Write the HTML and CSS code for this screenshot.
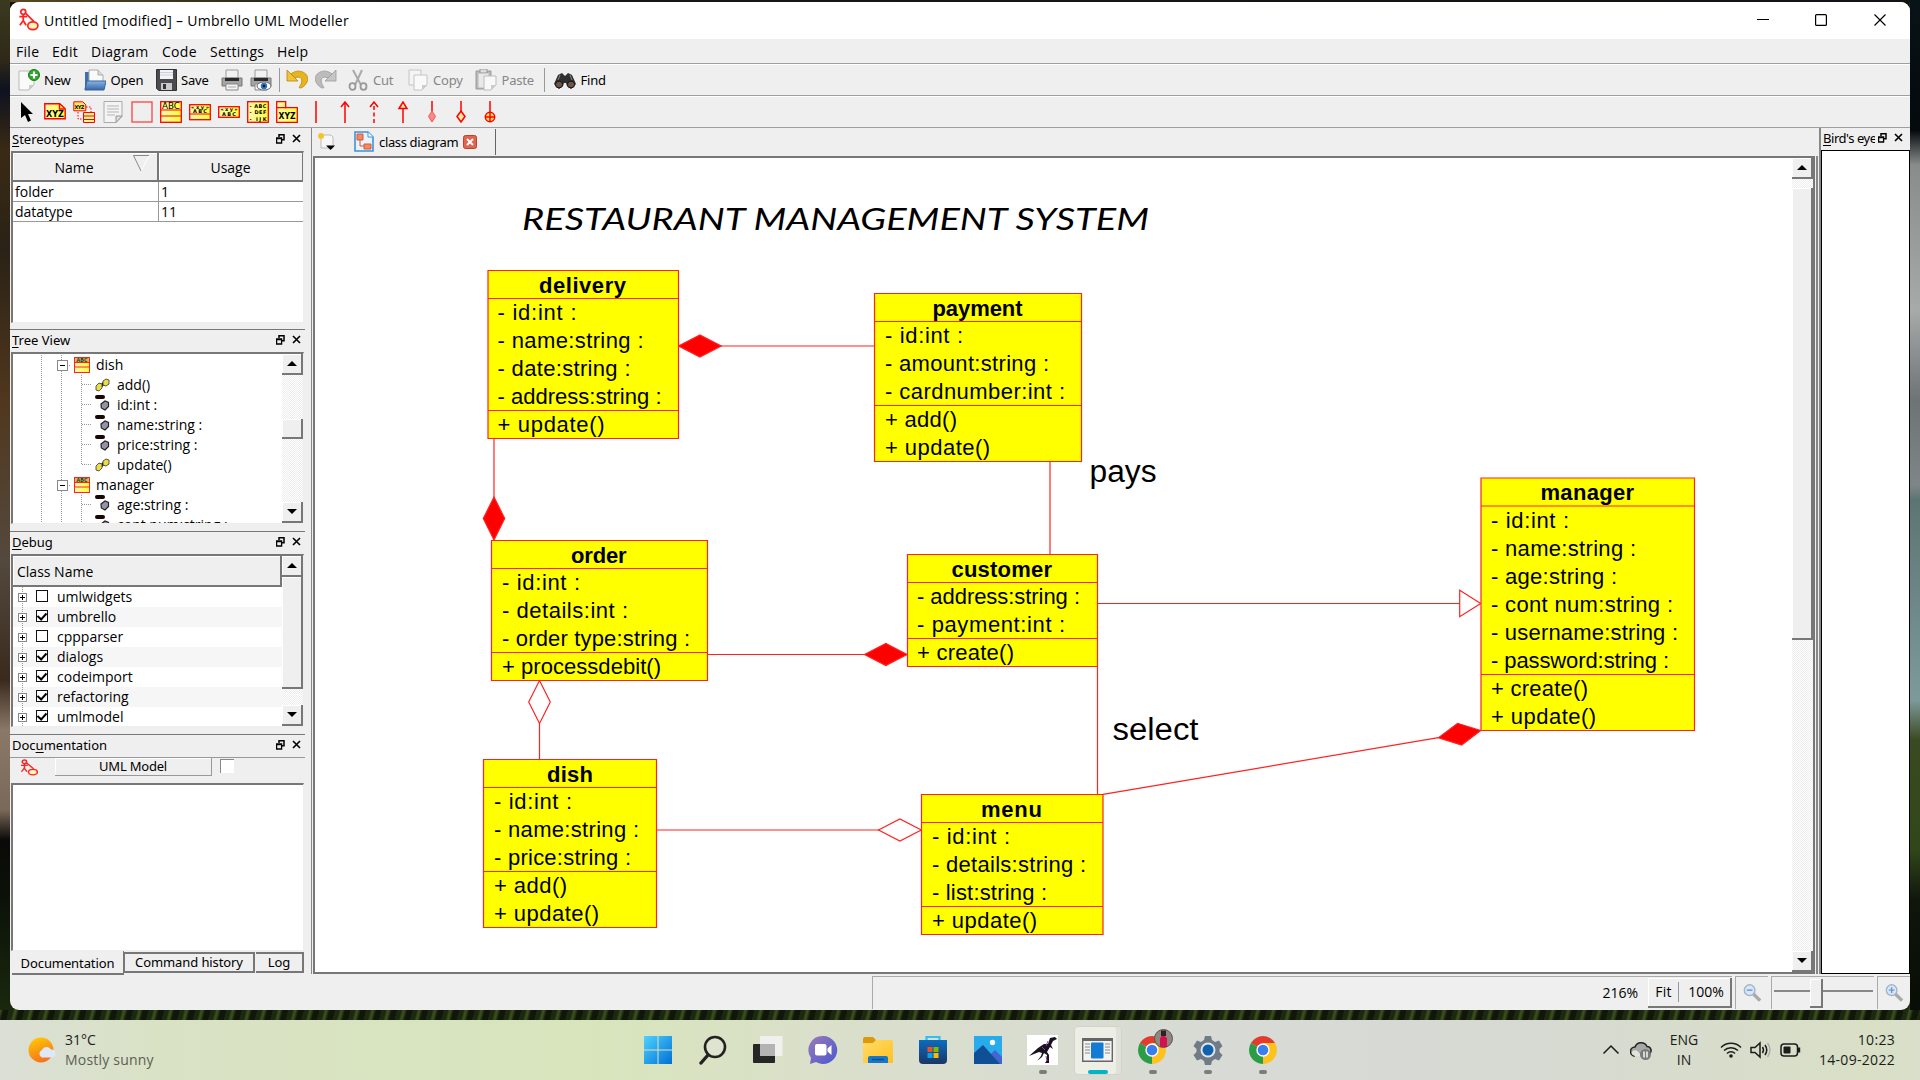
FILE: index.html
```html
<!DOCTYPE html>
<html lang="en">
<head>
<meta charset="utf-8">
<title>Umbrello UML Modeller</title>
<link rel="stylesheet" href="styles.css">
</head>
<body>
<svg class="defs" width="0" height="0">
  <defs>
    <linearGradient id="yel" x1="0" y1="0" x2="1" y2="0"><stop offset="0" stop-color="#fff9b0"/><stop offset="1" stop-color="#ffff38"/></linearGradient>
    <linearGradient id="blu" x1="0" y1="0" x2="0" y2="1"><stop offset="0" stop-color="#8db4e2"/><stop offset="1" stop-color="#3566a8"/></linearGradient>
    <linearGradient id="win" x1="0" y1="0" x2="1" y2="1"><stop offset="0" stop-color="#4fd2ff"/><stop offset="1" stop-color="#0070d4"/></linearGradient>
    <linearGradient id="sun" x1="0" y1="0" x2=".4" y2="1"><stop offset="0" stop-color="#ffd000"/><stop offset="1" stop-color="#f5751d"/></linearGradient>
    <linearGradient id="chat" x1="0" y1="0" x2="1" y2="1"><stop offset="0" stop-color="#9a7bb8"/><stop offset="1" stop-color="#4a57d2"/></linearGradient>
    <linearGradient id="fold" x1="0" y1="0" x2="1" y2="1"><stop offset="0" stop-color="#ffdc68"/><stop offset="1" stop-color="#ffc122"/></linearGradient>
    <linearGradient id="store" x1="0" y1="0" x2="0" y2="1"><stop offset="0" stop-color="#0b6cc0"/><stop offset="1" stop-color="#1c3566"/></linearGradient>
    <symbol id="i-app" viewBox="0 0 20 24"><g fill="none" stroke="#f22" stroke-width="1.8"><circle cx="4" cy="4" r="2.6"/><path d="M4 7v6M0 9h8M4 13l-3.500 5M4 13l3 5M6 5l9 9"/><ellipse cx="14" cy="18.500" rx="5.300" ry="4" fill="#fdf7b8"/></g></symbol>
    <symbol id="i-class" viewBox="0 0 16 16"><rect x=".5" y=".5" width="15" height="15" fill="url(#yel)" stroke="#f22"/><path d="M1 5.500h14M1 10h14" stroke="#f22" stroke-width="1.200"/><path d="M1 1h14v4H1z" fill="#c8bd55"/><text x="8" y="5" font-size="5.500" font-weight="bold" text-anchor="middle" fill="#333">ABC</text></symbol>
    <symbol id="i-op" viewBox="0 0 15 14"><path d="M6 8l4-4" stroke="#222" stroke-width="3"/><path d="M1 8l3-3 3 1v4l-3 3-3-1zM8 3l3-2 3 1v4l-3 2-3-1z" fill="#eddc44" stroke="#333" stroke-width=".8"/></symbol>
    <symbol id="i-attr" viewBox="0 0 15 16"><rect x="0" y="0" width="10" height="4" rx="2" fill="#1b0606"/><path d="M6 9l4-3 3.500 1.500v4L10 15l-3.700-2z" fill="#9693a6" stroke="#222" stroke-width="1.200"/></symbol>
    <symbol id="i-float" viewBox="0 0 9 10"><path d="M3 .8h5v5H6M3 0v3" fill="none" stroke="#000" stroke-width="1.500"/><path d="M.6 4h5v5h-5zM0 4.500h6" fill="none" stroke="#000" stroke-width="1.300"/></symbol>
    <symbol id="i-x" viewBox="0 0 9 9"><path d="M1 1l7 7M8 1L1 8" stroke="#000" stroke-width="1.600"/></symbol>
    <symbol id="i-chrome" viewBox="0 0 28 28"><path d="M14 14L1.900 7A14 14 0 0 1 26.100 7z" fill="#e33b2e"/><path d="M14 14L1.900 7A14 14 0 0 0 14 28l6-10.500z" fill="#2c9d47"/><path d="M14 14l0 14A14 14 0 0 0 26.100 7H14z" fill="#fcc31e"/><circle cx="14" cy="14" r="6.700" fill="#fff"/><circle cx="14" cy="14" r="5.300" fill="#3b7ded"/></symbol>
    <symbol id="i-print" viewBox="0 0 22 22"><path d="M5 1h12v8H5z" fill="#f2f2f2" stroke="#999"/><path d="M1 9h20v8H1z" fill="#a4a4a4" stroke="#777"/><path d="M4 9h14v3H4z" fill="#2a2a2a"/><path d="M5 15h12v6H5z" fill="#f4f4f4" stroke="#888"/><path d="M7 18h8" stroke="#aaa"/></symbol>
    <symbol id="i-lens" viewBox="0 0 20 20"><path d="M11 11l7 7" stroke="#aaa" stroke-width="3.600"/><circle cx="7" cy="7" r="5.600" fill="#d6e8fb" stroke="#a7b4c2" stroke-width="1.500"/></symbol>
  </defs>
</svg>

<div class="window">
  <header class="titlebar">
    <svg class="app-icon" width="20" height="23"><use href="#i-app"/></svg>
    <span class="caption">Untitled [modified] – Umbrello UML Modeller</span>
    <svg class="winctl" width="150" height="20" viewBox="0 0 150 20"><g fill="none" stroke="#000" stroke-width="1.200"><path d="M7 9.500h12"/><rect x="65.600" y="4.600" width="10.800" height="10.800" rx="1"/><path d="M124.500 4.500l11 11M135.500 4.500l-11 11"/></g></svg>
  </header>
  <nav class="menubar"><span>File</span><span>Edit</span><span>Diagram</span><span>Code</span><span>Settings</span><span>Help</span></nav>

  <div class="toolbar main">
    <svg width="22" height="22" viewBox="0 0 22 22"><path d="M1 2h15v14l-5 5H1z" fill="#fafafa" stroke="#b9b9b9"/><path d="M16 16h-5v5z" fill="#ccc"/><circle cx="16" cy="6" r="5.500" fill="#2ba82b" stroke="#128012"/><path d="M16 2.500v7M12.500 6h7" stroke="#fff" stroke-width="2.200"/></svg><span>New</span>
    <svg width="22" height="22" viewBox="0 0 22 22"><path d="M1 3h5l1 3v14H1z" fill="#3d6fae"/><path d="M5 1h9l5 5v12H5z" fill="#fafafa" stroke="#aaa"/><path d="M14 1v5h5" fill="#ddd" stroke="#aaa"/><path d="M1 20l2-8h19l-2 9H1z" fill="url(#blu)" stroke="#35659f"/></svg><span>Open</span>
    <svg width="21" height="22" viewBox="0 0 21 22"><path d="M.5.5h20v21H3l-2.500-2z" fill="#4a4a50" stroke="#333"/><path d="M4 1h13v9H4z" fill="#f4f4f4"/><path d="M4 3.500h13M4 6h13" stroke="#c9d0de"/><path d="M5 14h11v7H5z" fill="#c9c9c9"/><path d="M7 15h3v5H7z" fill="#333"/></svg><span>Save</span>
    <svg width="22" height="22"><use href="#i-print"/></svg>
    <svg width="22" height="22" viewBox="0 0 22 22"><use href="#i-print" width="22" height="22"/><ellipse cx="14" cy="17" rx="7" ry="4" fill="#fff" stroke="#667"/><circle cx="14" cy="17" r="3.200" fill="#2d74c0"/><circle cx="14" cy="17" r="1.300" fill="#012"/></svg>
    <i class="sep"></i>
    <svg width="22" height="22" viewBox="0 0 22 22"><path d="M5 5C13-2 25 5 21 13c-2 4-5 6-7 6-1 0-1-1 0-2 4-6 1-11-5-8z" fill="#e8b31c" stroke="#b98708" stroke-width=".8"/><path d="M1 1v11h11z" fill="#f0c43a" stroke="#b98708" stroke-width=".8"/></svg>
    <svg width="22" height="22" viewBox="0 0 22 22"><g transform="translate(22 0) scale(-1 1)"><path d="M5 5C13-2 25 5 21 13c-2 4-5 6-7 6-1 0-1-1 0-2 4-6 1-11-5-8z" fill="#bcbcbc" stroke="#999" stroke-width=".8"/><path d="M1 1v11h11z" fill="#c6c6c6" stroke="#999" stroke-width=".8"/></g></svg>
    <svg width="20" height="22" viewBox="0 0 20 22"><path d="M5 1l8 15M14 1L7 16" stroke="#aaa" stroke-width="2"/><g fill="none" stroke="#999" stroke-width="1.800"><ellipse cx="4.500" cy="17.500" rx="3" ry="3.300"/><ellipse cx="15.500" cy="17.500" rx="3" ry="3.300"/></g></svg><span class="off">Cut</span>
    <svg width="20" height="22" viewBox="0 0 20 22"><path d="M1 1h12v15H1z" fill="#f4f4f4" stroke="#c4c4c4"/><path d="M6 6h13v10l-5 5H6z" fill="#f9f9f9" stroke="#c4c4c4"/><path d="M19 16h-5v5z" fill="#ccc"/></svg><span class="off">Copy</span>
    <svg width="22" height="22" viewBox="0 0 22 22"><path d="M1 2h15v18H1z" fill="#b9b9b9" stroke="#999"/><path d="M5 0h7v4H5z" fill="#ddd" stroke="#999"/><path d="M3.500 4.500h10v14h-10z" fill="#e9e9e9"/><path d="M9 7h12v9l-5 5H9z" fill="#f8f8f8" stroke="#bbb"/><path d="M21 16h-5v5z" fill="#ccc"/></svg><span class="off">Paste</span>
    <i class="sep"></i>
    <svg width="22" height="22" viewBox="0 0 22 22"><path d="M4 6l4-2 3 3 3-3 4 2 4 9-5 5-4-3-1-3h-2l-1 3-4 3-5-5z" fill="#302f2f"/><ellipse cx="5" cy="15.500" rx="3.600" ry="3.400" fill="#6b5648" stroke="#111"/><ellipse cx="17" cy="15.500" rx="3.600" ry="3.400" fill="#6b5648" stroke="#111"/><path d="M6 6l-2 5M16 6l2 5" stroke="#888"/></svg><span>Find</span>
  </div>

  <div class="toolbar tools">
    <svg viewBox="0 0 22 22"><path d="M6 1v16l4-3 3 7 3-1.500-3-6.500h5z" fill="#000"/></svg>
    <svg viewBox="0 0 22 22"><path d="M.8 2.800h15l5.400 5v10H.8z" fill="url(#yel)" stroke="#f00" stroke-width="1.400"/><path d="M15.500 3v5h5" fill="none" stroke="#f00" stroke-width="1.400"/><text class="glyph" x="11" y="15.500" textLength="18" lengthAdjust="spacingAndGlyphs">XYZ</text></svg>
    <svg viewBox="0 0 22 22"><path d="M.8.8h9l3 3v6h-12z" fill="#ffe866" stroke="#f00"/><text class="glyph xs" x="6.500" y="8" textLength="10">XYZ</text><path d="M13 6h5v5M5 11v7h4" fill="none" stroke="#f00" stroke-dasharray="1.500 1.500"/><path d="M10.500 11.500h11v10h-11zM10.500 15h11M10.500 18.500h11" fill="#fff690" stroke="#f00"/></svg>
    <svg viewBox="0 0 22 22"><path d="M2 .5h18v15l-6 6H2z" fill="#f4f4f4" stroke="#aaa"/><path d="M5 5h12M5 8h12M5 11h12M5 14h8" stroke="#b5b5b5"/><path d="M20 15h-6v6.500z" fill="#ddd" stroke="#999"/></svg>
    <svg viewBox="0 0 22 22"><rect x="1" y="1" width="20" height="20" fill="none" stroke="#f33" stroke-width="1.200"/></svg>
    <svg viewBox="0 0 22 22"><rect x=".7" y=".7" width="20.600" height="20.600" fill="url(#yel)" stroke="#f00" stroke-width="1.300"/><path d="M1 9h20M1 15h20" stroke="#f00" stroke-width="1.200"/><text class="glyph n" x="11" y="7.500" textLength="18" lengthAdjust="spacingAndGlyphs">ABC</text></svg>
    <svg viewBox="0 0 22 22"><rect x=".7" y="3.700" width="20.600" height="15" fill="url(#yel)" stroke="#f00" stroke-width="1.300"/><path d="M1 13h20" stroke="#f00" stroke-width="1.200"/><text class="glyph xs" x="11" y="7.500" textLength="18">«xy»</text><text class="glyph xs" x="11" y="12" textLength="14">ABC</text></svg>
    <svg viewBox="0 0 22 22"><rect x=".7" y="5.700" width="20.600" height="10.600" fill="url(#yel)" stroke="#f00" stroke-width="1.300"/><text class="glyph xs" x="11" y="10" textLength="17">«xy»</text><text class="glyph xs" x="11" y="15" textLength="14">ABC</text></svg>
    <svg viewBox="0 0 22 22"><rect x=".7" y=".7" width="20.600" height="20.600" fill="url(#yel)" stroke="#f00" stroke-width="1.300"/><text class="glyph xs" x="11" y="6.500" textLength="17">- ABC</text><text class="glyph xs" x="11" y="13" textLength="17">- DEF</text><text class="glyph xs" x="11" y="19.500" textLength="17">- IJK</text></svg>
    <svg viewBox="0 0 22 22"><path d="M.7.700h9v6h11.600v14.600H.7z" fill="url(#yel)" stroke="#f00" stroke-width="1.300"/><path d="M1 6.700h9" stroke="#f00" stroke-width="1.300"/><text class="glyph" x="11" y="18" textLength="17" lengthAdjust="spacingAndGlyphs">XYZ</text></svg>
    <svg viewBox="0 0 22 22"><path d="M11 0v22" class="r"/></svg>
    <svg viewBox="0 0 22 22"><path d="M11 22V2M7 6l4-5 4 5" class="r nf"/></svg>
    <svg viewBox="0 0 22 22"><path d="M11 22V2" class="r" stroke-dasharray="4 2.500"/><path d="M7 6l4-5 4 5" class="r nf"/></svg>
    <svg viewBox="0 0 22 22"><path d="M11 22V7M7 7.500l4-6.500 4 6.500z" class="r"/></svg>
    <svg viewBox="0 0 22 22"><path d="M11 0v10" class="r"/><path d="M11 10l3.500 5.500L11 21l-3.500-5.500z" fill="#f88" stroke="#e55"/></svg>
    <svg viewBox="0 0 22 22"><path d="M11 0v10" class="r"/><path d="M11 10l4 5.500-4 5.500-4-5.500z" class="r"/></svg>
    <svg viewBox="0 0 22 22"><circle cx="11" cy="16" r="4.700" class="r y"/><path d="M11 0v21M6 16h10" class="r"/></svg>
  </div>

  <div class="work">
    <aside class="dock">
      <section class="pane p1">
        <h2><span><u>S</u>tereotypes</span><svg width="9" height="10"><use href="#i-float"/></svg><svg width="9" height="9"><use href="#i-x"/></svg></h2>
        <div class="frame">
          <div class="grid">
            <b>Name<svg width="17" height="17" viewBox="0 0 17 17"><path d="M16 1L8 16" stroke="#fff" fill="none"/><path d="M16 .5H.5L8 16" stroke="#888" fill="none"/></svg></b><b>Usage</b>
            <span>folder</span><span>1</span>
            <span>datatype</span><span>11</span>
          </div>
        </div>
      </section>
      <section class="pane p2">
        <h2><span><u>T</u>ree View</span><svg width="9" height="10"><use href="#i-float"/></svg><svg width="9" height="9"><use href="#i-x"/></svg></h2>
        <div class="frame split">
          <div class="tree">
            <div class="node"><i class="g full"></i><i class="g full box"></i><svg width="16" height="16"><use href="#i-class"/></svg><span>dish</span></div>
            <div class="node"><i class="g full"></i><i class="g full"></i><i class="g full leaf"></i><svg width="15" height="14"><use href="#i-op"/></svg><span>add()</span></div>
            <div class="node"><i class="g full"></i><i class="g full"></i><i class="g full leaf"></i><svg class="at" width="15" height="16"><use href="#i-attr"/></svg><span>id:int :</span></div>
            <div class="node"><i class="g full"></i><i class="g full"></i><i class="g full leaf"></i><svg class="at" width="15" height="16"><use href="#i-attr"/></svg><span>name:string :</span></div>
            <div class="node"><i class="g full"></i><i class="g full"></i><i class="g full leaf"></i><svg class="at" width="15" height="16"><use href="#i-attr"/></svg><span>price:string :</span></div>
            <div class="node"><i class="g full"></i><i class="g full"></i><i class="g half leaf"></i><svg width="15" height="14"><use href="#i-op"/></svg><span>update()</span></div>
            <div class="node"><i class="g full"></i><i class="g full box"></i><svg width="16" height="16"><use href="#i-class"/></svg><span>manager</span></div>
            <div class="node"><i class="g full"></i><i class="g full"></i><i class="g full leaf"></i><svg class="at" width="15" height="16"><use href="#i-attr"/></svg><span>age:string :</span></div>
            <div class="node"><i class="g full"></i><i class="g full"></i><i class="g full leaf"></i><svg class="at" width="15" height="16"><use href="#i-attr"/></svg><span>cont num:string :</span></div>
          </div>
          <div class="sbar"><i class="btn up"></i><i class="trough t44"></i><i class="btn h20"></i><i class="trough"></i><i class="btn down"></i></div>
        </div>
      </section>
      <section class="pane p3">
        <h2><span><u>D</u>ebug</span><svg width="9" height="10"><use href="#i-float"/></svg><svg width="9" height="9"><use href="#i-x"/></svg></h2>
        <div class="frame split">
          <div class="checks">
            <b>Class Name</b>
            <div><i class="plus"></i><i class="ck"></i>umlwidgets</div>
            <div><i class="plus"></i><i class="ck on"></i>umbrello</div>
            <div><i class="plus"></i><i class="ck"></i>cppparser</div>
            <div><i class="plus"></i><i class="ck on"></i>dialogs</div>
            <div><i class="plus"></i><i class="ck on"></i>codeimport</div>
            <div><i class="plus"></i><i class="ck on"></i>refactoring</div>
            <div><i class="plus"></i><i class="ck on"></i>umlmodel</div>
          </div>
          <div class="sbar"><i class="btn up"></i><i class="btn h112"></i><i class="trough"></i><i class="btn down"></i></div>
        </div>
      </section>
      <section class="pane p4">
        <h2><span>Doc<u>u</u>mentation</span><svg width="9" height="10"><use href="#i-float"/></svg><svg width="9" height="9"><use href="#i-x"/></svg></h2>
        <div class="docbar"><svg width="17" height="17" viewBox="0 0 20 24" preserveAspectRatio="none"><use href="#i-app" width="20" height="24"/></svg><span>UML Model</span><i></i></div>
        <div class="frame"></div>
        <div class="tabs"><span class="sel">Documentation</span><span>Command history</span><span>Log</span></div>
      </section>
    </aside>

    <main class="center">
      <div class="tabbar">
        <svg width="18" height="18" viewBox="0 0 18 18"><path d="M3 2h10l2 2v11H3z" fill="#f7f7f7" stroke="#bbb"/><circle cx="3" cy="3" r="3" fill="#f5c528"/><path d="M8 12.500h9L12.500 17z" fill="#000"/></svg>
        <svg width="20" height="21" viewBox="0 0 20 21"><path d="M1 1h13l5 5v14H1z" fill="#e8f3fd" stroke="#3d93da" stroke-width="1.600"/><path d="M14 1v5h5" fill="#fff" stroke="#3d93da"/><path d="M3 3h6v6H3zM10 13h7v5h-7z" fill="#f08a62" stroke="#d25a33"/><path d="M6 9v6h4" fill="none" stroke="#d25a33"/></svg>
        <span>class diagram</span>
        <svg width="14" height="14" viewBox="0 0 14 14"><rect x=".5" y=".5" width="13" height="13" rx="2" fill="#e0644e" stroke="#c2402b"/><path d="M4 4l6 6M10 4l-6 6" stroke="#fff" stroke-width="2"/></svg>
        <i></i>
      </div>
      <div class="canvas">
        <svg class="diagram" width="1477" height="814" viewBox="315 158 1477 814">
          <text class="heading" x="522" y="230" textLength="627" lengthAdjust="spacingAndGlyphs">RESTAURANT MANAGEMENT SYSTEM</text>
          <g class="edge">
            <path d="M678.500 346H874.500M494 438.500V540M1050 461.500V554.500M1097.700 603.500H1460M707.500 654.500H907M539.500 723V759.500M656.500 830H879M1097.500 667V794.500M1103 794.300L1438.400 737.700"/>
            <path class="fill" d="M678.500 346l21.400-11 21.400 11-21.400 11zM494 497l10.700 21.500L494 540l-10.700-21.500zM864.500 654.500l21.300-11 21.300 11-21.300 11zM1480.800 730.500l-23.200-7.200-19.200 14.400 23.200 7.300z"/>
            <path class="hollow" d="M539.500 680.500l10.800 21.500-10.800 21.500-10.800-21.500zM878.500 830l21.400-11 21.400 11-21.400 11zM1459.700 590.300l21 13.200-21 13.200z"/>
          </g>
          <g class="cls"><path d="M488 270.500h190.500v168H488zM488 298.500h190.500M488 410.500h190.500"/>
            <text class="t" x="539" y="293" textLength="87">delivery</text>
            <text x="497.500" y="320" textLength="79">- id:int :</text><text x="497.500" y="348" textLength="146">- name:string :</text><text x="497.500" y="376" textLength="133">- date:string :</text><text x="497.500" y="404" textLength="164">- address:string :</text><text x="497.500" y="432" textLength="107">+ update()</text></g>
          <g class="cls"><path d="M874.500 293.500h207v168h-207zM874.500 321.500h207M874.500 405.500h207"/>
            <text class="t" x="932.500" y="316" textLength="90">payment</text>
            <text x="885" y="343" textLength="78">- id:int :</text><text x="885" y="371" textLength="164">- amount:string :</text><text x="885" y="399" textLength="180">- cardnumber:int :</text><text x="885" y="427" textLength="72">+ add()</text><text x="885" y="455" textLength="105">+ update()</text></g>
          <g class="cls"><path d="M491.500 540.500h216v140h-216zM491.500 568.500h216M491.500 652.500h216"/>
            <text class="t" x="571" y="563" textLength="55.500">order</text>
            <text x="502" y="590" textLength="78">- id:int :</text><text x="502" y="618" textLength="126">- details:int :</text><text x="502" y="646" textLength="188">- order type:string :</text><text x="502" y="674" textLength="159">+ processdebit()</text></g>
          <g class="cls"><path d="M907.500 554.500h190v112h-190zM907.500 582.500h190M907.500 638.500h190"/>
            <text class="t" x="951.500" y="577" textLength="100.500">customer</text>
            <text x="917" y="604" textLength="163">- address:string :</text><text x="917" y="632" textLength="148">- payment:int :</text><text x="917" y="660" textLength="97">+ create()</text></g>
          <g class="cls"><path d="M483.500 759.500h173v168h-173zM483.500 787.500h173M483.500 871.500h173"/>
            <text class="t" x="547" y="782" textLength="46">dish</text>
            <text x="494" y="809" textLength="78">- id:int :</text><text x="494" y="837" textLength="145">- name:string :</text><text x="494" y="865" textLength="137">- price:string :</text><text x="494" y="893" textLength="73">+ add()</text><text x="494" y="921" textLength="105">+ update()</text></g>
          <g class="cls"><path d="M921.500 794.500h181.500v140h-181.500zM921.500 822.500h181.500M921.500 906.500h181.500"/>
            <text class="t" x="981" y="817" textLength="61">menu</text>
            <text x="932" y="844" textLength="78">- id:int :</text><text x="932" y="872" textLength="154">- details:string :</text><text x="932" y="900" textLength="115">- list:string :</text><text x="932" y="928" textLength="105">+ update()</text></g>
          <g class="cls"><path d="M1481 478h213.500v252.500H1481zM1481 506h213.500M1481 674.500h213.500"/>
            <text class="t" x="1540.500" y="500" textLength="93.500">manager</text>
            <text x="1491" y="528" textLength="78">- id:int :</text><text x="1491" y="556" textLength="145">- name:string :</text><text x="1491" y="584" textLength="126">- age:string :</text><text x="1491" y="612" textLength="182">- cont num:string :</text><text x="1491" y="640" textLength="187">- username:string :</text><text x="1491" y="668" textLength="178">- password:string :</text><text x="1491" y="696" textLength="97">+ create()</text><text x="1491" y="724" textLength="105">+ update()</text></g>
          <text class="note" x="1089.500" y="482" textLength="67" lengthAdjust="spacingAndGlyphs">pays</text>
          <text class="note" x="1112.500" y="739.500" textLength="86" lengthAdjust="spacingAndGlyphs">select</text>
        </svg>
        <div class="sbar big"><i class="btn up"></i><i class="trough t9"></i><i class="btn h452"></i><i class="trough"></i><i class="btn down"></i></div>
      </div>
    </main>

    <aside class="birds">
      <h2><span><u>B</u>ird's eye</span><svg width="9" height="10"><use href="#i-float"/></svg><svg width="9" height="9"><use href="#i-x"/></svg></h2>
      <div class="view"></div>
    </aside>
  </div>

  <footer class="status">
    <div class="blank"></div>
    <div class="zoomtext"><span>216%</span><div class="fit"><span>Fit</span><span>100%</span></div></div>
    <div class="cell"><svg width="19" height="20" viewBox="0 0 20 20"><use href="#i-lens" width="20" height="20"/><path d="M4 7h6" stroke="#6d97c8" stroke-width="1.500"/></svg></div>
    <div class="cell slider"><i></i></div>
    <div class="cell"><svg width="19" height="20" viewBox="0 0 20 20"><use href="#i-lens" width="20" height="20"/><path d="M4 7h6M7 4v6" stroke="#6d97c8" stroke-width="1.500"/></svg></div>
  </footer>
</div>

<div class="taskbar">
  <div class="weather">
    <svg width="28" height="27" viewBox="0 0 28 27"><circle cx="13" cy="13" r="12.500" fill="url(#sun)"/><path d="M14 20.500a4 4 0 0 1 0-7.500 5 5 0 0 1 9-.500 4 4 0 0 1 1 8z" fill="#dfe8f8"/></svg>
    <div><span>31°C</span><span class="dim">Mostly sunny</span></div>
  </div>
  <div class="apps">
    <div><svg width="30" height="30" viewBox="0 0 30 30"><path d="M1 1h13.500v13.500H1zM15.500 1H29v13.500H15.500zM1 15.500h13.500V29H1zM15.500 15.500H29V29H15.500z" fill="url(#win)"/></svg></div>
    <div><svg width="30" height="30" viewBox="0 0 30 30"><circle cx="17" cy="12" r="10" fill="#dfe4d0" stroke="#222" stroke-width="2.600"/><path d="M10 20l-7 8" stroke="#222" stroke-width="3.400" stroke-linecap="round"/></svg></div>
    <div><svg width="30" height="30" viewBox="0 0 30 30"><rect x="0" y="9" width="22" height="19" rx="1" fill="#262626"/><rect x="7" y="1" width="22.500" height="20" rx="1" fill="#f1f1f1" opacity=".95"/><path d="M7 9h15v12H7z" fill="#b3b3b3"/></svg></div>
    <div><svg width="30" height="30" viewBox="0 0 30 30"><path d="M15 1a14 14 0 1 1-7 26l-6 2 1-6A14 14 0 0 1 15 1z" fill="url(#chat)"/><rect x="7" y="9" width="11.500" height="11.500" rx="2" fill="#fff"/><path d="M19.500 13.500l4-3.500v10l-4-3.500z" fill="#fff"/></svg></div>
    <div><svg width="30" height="30" viewBox="0 0 30 30"><path d="M0 4a2 2 0 0 1 2-2h8l3 3v5H0z" fill="#dc9a08"/><path d="M0 8h10l3-3h15a2 2 0 0 1 2 2v21H0z" fill="url(#fold)"/><path d="M5 28v-5a2 2 0 0 1 2-2h16a2 2 0 0 1 2 2v5z" fill="#1878c8"/><path d="M9 24.500h12" stroke="#0b4c90" stroke-width="1.500"/></svg></div>
    <div><svg width="30" height="30" viewBox="0 0 30 30"><path d="M8.500 6V2h13v4" fill="none" stroke="#2cc0f3" stroke-width="2.200"/><path d="M1 5h28v20a4 4 0 0 1-4 4H5a4 4 0 0 1-4-4z" fill="url(#store)"/><path d="M9.500 12h5v5h-5z" fill="#f25022"/><path d="M15.500 12h5v5h-5z" fill="#7fba00"/><path d="M9.500 18h5v5h-5z" fill="#00a4ef"/><path d="M15.500 18h5v5h-5z" fill="#ffb900"/></svg></div>
    <div><svg width="30" height="30" viewBox="0 0 30 30"><path d="M1 1h28v28H1z" fill="#27abea"/><path d="M17 20l5-5 7 7v7H17z" fill="#4465cf"/><path d="M1 18l9-8 17 19H1z" fill="#0f4f96"/><ellipse cx="19.500" cy="7.500" rx="2.700" ry="2.700" fill="#fff"/></svg></div>
    <div class="run"><svg width="31" height="30" viewBox="0 0 31 30"><path d="M0 0h31v30H0z" fill="#fff"/><path d="M28 2l-5 1-2 6-4 0-6 4-9 8 10-4 3 1-1 3-4 5 5-4 2-4 3 2 0 5-2 3h4l0-8-2-3 3-5 3 2-2-4 2-4 4-2z" fill="#1b1220"/><path d="M21 6l-2 5M15 12l3 3M19 21l1 5" stroke="#8b3fae"/></svg></div>
    <div class="run act"><svg width="31" height="24" viewBox="0 0 31 24"><path d="M.7.7h29.600v22.600H.7z" fill="#f3f3f3" stroke="#666" stroke-width="1.400"/><path d="M0 0h31v3H0z" fill="#666"/><path d="M3 6h5M3 9h5M3 12h5M3 15h5M23 6h5M23 9h5M23 12h5M23 15h5" stroke="#888"/><rect x="9" y="4.500" width="12.500" height="16" rx="1" fill="#137bd3"/></svg></div>
    <div class="run"><svg class="av" width="38" height="36" viewBox="0 0 38 36"><use href="#i-chrome" x="2" y="7" width="28" height="28"/><circle cx="27.500" cy="9.500" r="9" fill="#8e8880" stroke="#555"/><path d="M24 18V9l3-3 4 3v9z" fill="#d6104e"/><path d="M25 1.500h5v5.500h-5z" fill="#33201c"/></svg></div>
    <div class="run"><svg width="30" height="30" viewBox="0 0 30 30"><path d="M12 1h6l1 4 3 2 4-1.500 3.500 5.500-3 3v3l3 3-3.500 5.500-4-1.500-3 2-1 4h-6l-1-4-3-2-4 1.500L.5 20l3-3v-3l-3-3L4 5.500 8 7l3-2z" fill="#707b86"/><circle cx="15" cy="15" r="7.500" fill="#dfe5ea"/><circle cx="15" cy="15" r="5.500" fill="#0f62ae"/></svg></div>
    <div class="run"><svg width="28" height="28"><use href="#i-chrome"/></svg></div>
  </div>
  <div class="tray">
    <svg class="chev" width="18" height="12" viewBox="0 0 18 12"><path d="M1.500 10.500L9 3l7.500 7.500" fill="none" stroke="#1c1c1c" stroke-width="1.500"/></svg>
    <svg class="cloud" width="22" height="20" viewBox="0 0 22 20"><path d="M5 15a4.500 4.500 0 0 1 0-9 6.500 6.500 0 0 1 12-.5A4 4 0 0 1 19 13" fill="#a8a8a8" stroke="#222" stroke-width="1.500"/><path d="M1.500 12C3 8 8 8 11 15H5a4 4 0 0 1-3.500-3z" fill="#e0e4da"/><circle cx="15.500" cy="13.500" r="5.500" fill="#7a7a7a"/><path d="M14 10.500v6M17 10.500v6" stroke="#fff" stroke-width="1.400"/></svg>
    <div class="lang"><span>ENG</span><span>IN</span></div>
    <svg class="wifi" width="22" height="17" viewBox="0 0 22 17"><g fill="none" stroke="#1c1c1c" stroke-width="1.500"><path d="M1 6.500a14 14 0 0 1 20 0M4 9.500a10 10 0 0 1 14 0M7 12.500a5.700 5.700 0 0 1 8 0"/></g><circle cx="11" cy="15" r="1.800" fill="#1c1c1c"/></svg>
    <svg class="spk" width="22" height="18" viewBox="0 0 22 18"><path d="M1 6.500h4l5-4.500v14l-5-4.500H1z" fill="none" stroke="#1c1c1c" stroke-width="1.500"/><path d="M12.500 6q2 3 0 6M15 4q3.500 5 0 10" fill="none" stroke="#1c1c1c" stroke-width="1.500"/><path d="M17.500 2q5 7 0 14" fill="none" stroke="#aaa" stroke-width="1.300"/></svg>
    <svg class="bat" width="21" height="14" viewBox="0 0 21 14"><rect x="1" y="1" width="16.500" height="12" rx="3" fill="none" stroke="#1c1c1c" stroke-width="1.500"/><rect x="3.500" y="3.500" width="7" height="7" rx="1" fill="#1c1c1c"/><path d="M19 4.500v5" stroke="#1c1c1c" stroke-width="2.400"/></svg>
    <div class="clock"><span>10:23</span><span>14-09-2022</span></div>
  </div>
</div>
</body>
</html>
```
FILE: styles.css
```css
* { box-sizing: border-box; }
body {
  margin: 0; width: 1920px; height: 1080px; overflow: hidden;
  display: flex; flex-direction: column;
  font: 14px/20px "Open Sans", "Noto Sans", sans-serif; color: #000;
  background:
    linear-gradient(#081318 0, #04090c 130px, #8a8c8b 165px, #a8aaaa 310px, #6e7373 400px, #7f8687 485px, #5d7474 500px, #7d9a9b 700px, #3a4a22 740px, #31461a 850px, #10160b 900px, #080c06 100%) 1910px 0 / 10px 1010px no-repeat,
    linear-gradient(#3a3a20 0, #2f2818 60px, #0d1220 90px, #3a2a14 150px, #2a2216 250px, #50371e 400px, #54493d 560px, #3a2a1e 680px, #8a7868 730px, #7a6858 810px, #0a0a08 840px, #0c1208 900px, #1a280e 100%) 0 0 / 10px 1010px no-repeat,
    linear-gradient(90deg, #5a4a20, #14181a 400px, #101418) 0 0 / 1920px 2px no-repeat,
    repeating-linear-gradient(105deg, #1c280f 0 4px, #3a4d1d 6px 7px, #10170a 10px 15px);
}
svg { display: block; flex: none; }
.defs { position: absolute; }
i { display: block; flex: none; }
h2 { margin: 0; font: 13px/20px "Noto Sans", sans-serif; }
u { text-underline-offset: 2px; }

.window {
  margin: 2px 0 0 10px; width: 1900px; height: 1008px; flex: none;
  display: flex; flex-direction: column; overflow: hidden;
  background: #efefef; border-radius: 9px;
}
.titlebar { height: 37px; flex: none; display: flex; align-items: center; background: #fff; padding-left: 9px; }
.app-icon { margin: -2px 5px 0 0; }
.caption { flex: 1; letter-spacing: .26px; }
.winctl { margin: -2px 7px 0 0; width: 156px; }
.menubar {
  height: 24px; flex: none; padding-left: 6px; line-height: 25px; letter-spacing: .3px;
  display: grid; grid-template-columns: 36px 39px 71px 48px 67px 60px;
}

.toolbar { height: 32px; flex: none; display: grid; align-items: center; border-top: 1px solid #9f9f9f; box-shadow: inset 0 1px #fff; }
.toolbar.main {
  padding-left: 8px; font: 13px/20px "Noto Sans", sans-serif; letter-spacing: -.2px;
  grid-template-columns: 26px 40px 26.600px 45.400px 25px 40px 29px 29px 7px 29px 33px 25px 35px 25px 42.500px 26px 43px 10px 26px 40px;
}
.toolbar .off { color: #868686; }
.sep { width: 1px; height: 24px; background: #999; }
.tools { grid-template-columns: repeat(17, 29px); justify-items: center; padding-left: 1px; }
.tools svg { width: 22px; height: 22px; }
.r { stroke: #f00; stroke-width: 1.500; fill: #ffe9a0; }
.nf { fill: none; }
.y { fill: #ffdf60; }
.glyph { font: bold 8.500px "DejaVu Sans", sans-serif; text-anchor: middle; }
.glyph.n { font-weight: normal; font-size: 8px; }
.glyph.xs { font-size: 5px; }

.work { height: 847px; flex: none; display: flex; border-top: 1px solid #9f9f9f; }
.dock { width: 295px; }
.pane { display: flex; flex-direction: column; border-top: 1px solid #777; }
.pane h2, .birds h2 { display: flex; align-items: center; height: 22px; padding: 0 0 2px 2px; }
.pane h2 span { flex: 1; }
.pane h2 svg { margin: -1px 7px 0 0; }
.pane h2 svg:last-child { margin-right: 4px; }
.p1 { height: 201px; border-top-color: #efefef; }
.p2 { height: 202px; }
.p3 { height: 203px; }
.p4 { height: 241px; }
.frame { margin: 0 1px; background: #fff; border: solid #777; border-width: 2px 1px 1px 2px; border-right-color: #eee; border-bottom-color: #eee; overflow: hidden; }
.p1 .frame { height: 172px; }
.p2 .frame { height: 172px; }
.p3 .frame { height: 173px; }
.split { display: flex; }

.grid { width: 291px; display: grid; grid-template-columns: 146px 145px; grid-template-rows: 29px 20px 20px; }
.grid b, .checks b { font-weight: normal; background: #efefef; border: solid #777; border-width: 0 2px 2px 0; box-shadow: inset 1px 1px #fff; }
.grid b { display: flex; align-items: center; justify-content: center; padding-top: 2px; }
.grid b:first-child { padding-left: 34px; }
.grid b svg { margin: -8px 0 0 39px; }
.grid span { padding-left: 2px; border: solid #999; border-width: 0 1px 1px 0; line-height: 19px; }

.tree { width: 270px; height: 169px; overflow: hidden; padding: 1px 0 0 18px; }
.node { display: flex; align-items: center; height: 20px; }
.node span { padding-left: 6px; }
.node svg { margin-left: 3px; }
.leaf + svg + span { padding-left: 7px; }
.node .leaf + svg { margin-left: 4px; }
.node svg.at { margin-top: -4px; }
.g { width: 20px; height: 20px; background: repeating-linear-gradient(#999 0 1px, #fff 1px 2px) 10px 0 / 1px 100% no-repeat; }
.g.half { background-size: 1px 10px; }
.leaf::after { content: ""; display: block; margin: 9px 0 0 11px; width: 9px; height: 1px; background: repeating-linear-gradient(90deg, #999 0 1px, #fff 1px 2px); }
.box { display: flex; align-items: center; padding-left: 6px; }
.box::before { content: ""; width: 9px; height: 9px; flex: none; border: 1px solid #888; background: linear-gradient(#000, #000) center / 5px 1px no-repeat #fff; }
.box::after { content: ""; width: 5px; height: 1px; background: repeating-linear-gradient(90deg, #fff 0 1px, #999 1px 2px); }

.sbar { width: 21px; display: flex; flex-direction: column; }
.btn { width: 21px; height: 21px; background: #efefef; border: solid #777; border-width: 0 2px 2px 0; box-shadow: inset 1px 1px #fff; }
.up, .down { display: flex; align-items: center; justify-content: center; }
.up::before { content: ""; border: 5px solid transparent; border-top: 0; border-bottom-color: #000; }
.down::before { content: ""; border: 5px solid transparent; border-bottom: 0; border-top-color: #000; }
.trough { flex: 1; background: repeating-conic-gradient(#fff 0 25%, #ededed 0 50%) 0 0 / 2px 2px; }
.t44 { flex: none; height: 44px; }
.t9 { flex: none; height: 9px; }
.h20 { height: 20px; }
.h112 { height: 112px; }
.h452 { height: 452px; }

.checks { width: 270px; }
.checks b { display: block; height: 31px; padding-left: 4px; line-height: 31px; }
.checks div { display: flex; align-items: center; height: 20px; padding-left: 5px; background: repeating-linear-gradient(#999 0 1px, transparent 1px 2px) 9px 0 / 1px 100% no-repeat; }
.checks div:nth-child(odd) { background-color: #f6f6f6; }
.plus { width: 9px; height: 9px; border: 1px solid #888; background: linear-gradient(#000, #000) center / 5px 1px no-repeat, linear-gradient(#000, #000) center / 1px 5px no-repeat #fff; }
.ck { width: 12px; height: 12px; margin: -3px 9px 0 9px; border: 1.500px solid #111; background: #fff; }
.ck.on { display: flex; justify-content: center; }
.ck.on::before { content: ""; width: 4px; height: 7px; border: solid #000; border-width: 0 2px 2px 0; transform: rotate(42deg); }

.docbar { height: 26px; display: flex; align-items: flex-start; border-top: 1px solid #999; padding-left: 11px; }
.docbar svg { margin-top: 1px; }
.docbar span { width: 157px; height: 18px; margin: 0 8px 0 17px; text-align: center; border: solid #999; border-width: 0 1px 1px 0; box-shadow: inset 1px 1px #fff; font: 13px/17px "Noto Sans", sans-serif; letter-spacing: -.2px; }
.docbar i { width: 14px; height: 14px; margin-top: 1px; background: #fff; border: solid #888; border-width: 1px 0 0 1px; }
.p4 .frame { height: 169px; }
.tabs { display: flex; padding-left: 2px; font: 13px/20px "Noto Sans", sans-serif; text-align: center; letter-spacing: -.1px; }
.tabs span { height: 21px; margin-top: 1px; width: 48px; border: solid #777; border-width: 2px 2px 2px 0; line-height: 17px; }
.tabs span:nth-child(2) { width: 131px; margin-right: 1px; border-left-width: 1px; }
.tabs .sel { width: 112px; height: 24px; margin-top: 0; border-width: 0 1px 2px 0; line-height: 25px; }

.center { width: 1511px; margin-left: 6px; border-left: 1px solid #888; display: flex; flex-direction: column; }
.tabbar { height: 28px; flex: none; display: flex; align-items: center; padding-left: 6px; font: 13px/20px "Noto Sans", sans-serif; letter-spacing: -.35px; }
.tabbar svg:nth-child(2) { margin: -2px 5px 0 18px; }
.tabbar span { width: 84px; white-space: nowrap; }
.tabbar svg:nth-child(4) { margin-top: -1px; }
.tabbar i { width: 1px; height: 26px; margin-left: 18px; background: #666; }
.canvas { width: 1502px; height: 818px; margin-left: 1px; display: flex; background: #fff; border: 2px solid #777; box-shadow: 1px 0 #efefef, 3px 0 #888; }
.canvas .sbar { height: 814px; }

.diagram text { font: 22px "Liberation Sans", Arial, sans-serif; fill: #000; }
.diagram .t { font-weight: bold; }
.diagram .note { font-size: 31px; }
.diagram .heading { font: italic 31px "Lucida Calligraphy", Lato, sans-serif; }
.cls path { fill: #ff0; stroke: #f22; stroke-width: 1.200; }
.edge path { fill: none; stroke: #f22; stroke-width: 1.200; }
.edge .fill { fill: #f00; }
.edge .hollow { fill: #fff; }

.birds { flex: 1; border-left: 2px solid #888; display: flex; flex-direction: column; }
.birds h2 span { width: 52px; margin-right: 3px; overflow: hidden; white-space: nowrap; letter-spacing: -.45px; }
.birds h2 svg { margin: -1px 7px 0 0; }
.view { flex: 1; background: #fff; border: 1px solid #000; }

.status { flex: 1; display: flex; padding: 2px 0 1px; }
.blank { width: 863px; }
.zoomtext { width: 861px; display: flex; align-items: center; justify-content: flex-end; border: solid #aaa; border-width: 1px 0 0 1px; }
.fit { display: flex; align-items: center; margin-left: 10px; width: 84px; height: 30px; border: solid #777; border-width: 0 2px 2px 0; box-shadow: inset 1px 1px #fff; padding-left: 7px; }
.fit span:first-child { width: 24px; margin-right: 9px; border-right: 1px solid #999; letter-spacing: .3px; }
.cell { width: 33px; margin-left: 3px; border: solid #aaa; border-width: 1px 0 0 1px; display: flex; align-items: center; justify-content: center; }
.slider { width: 103px; background: linear-gradient(#888, #888) 2px 13px / 99px 2px no-repeat; justify-content: flex-start; padding-left: 38px; }
.slider i { width: 13px; height: 29px; background: #efefef; border: solid #777; border-width: 0 2px 2px 0; box-shadow: inset 1px 1px #fff; }

.taskbar {
  margin-top: 10px; height: 60px; flex: none; display: flex; color: #1c1c1c;
  background: linear-gradient(90deg, #dbdfd6 0, #d9e2c5 160px, #d8e5bc 600px, #dadfcc 850px, #d8dad6 1250px, #d6dad2 1550px, #d9e0c6 1870px, #d9dfca 100%);
}
.taskbar span { display: block; line-height: 20px; }
.weather { width: 630px; display: flex; padding: 10px 0 0 28px; }
.weather svg { margin: 7px 9px 0 0; }
.weather .dim { color: #5b5f52; letter-spacing: .2px; }
.apps { width: 950px; display: flex; }
.apps > div { width: 55px; height: 60px; position: relative; display: flex; align-items: center; justify-content: center; }
.run::after { content: ""; position: absolute; left: 24px; top: 50px; width: 8px; height: 4px; border-radius: 2px; background: #7c7d78; }
.apps > .act { width: 48px; height: 49px; margin: 6px 3px 0 4px; background: #edefe6; border: 1px solid #d2d4cc; border-radius: 4px; box-shadow: inset -5px 0 #e0e2da; padding: 0 2px 2px 0; }
.act::after { left: 13px; top: 43px; width: 20px; background: #00b5c4; }
.av { margin: -6px 0 0 4px; }
.tray { flex: 1; display: flex; padding-top: 10px; }
.chev { margin: 13px 0 0 22px; }
.cloud { margin: 11px 0 0 10px; }
.lang { width: 50px; margin-left: 7px; text-align: center; }
.wifi { margin: 11px 0 0 11px; }
.spk { margin: 11px 0 0 8px; }
.bat { margin: 13px 0 0 8px; }
.clock { flex: 1; text-align: right; padding-right: 25px; letter-spacing: .3px; }
```
